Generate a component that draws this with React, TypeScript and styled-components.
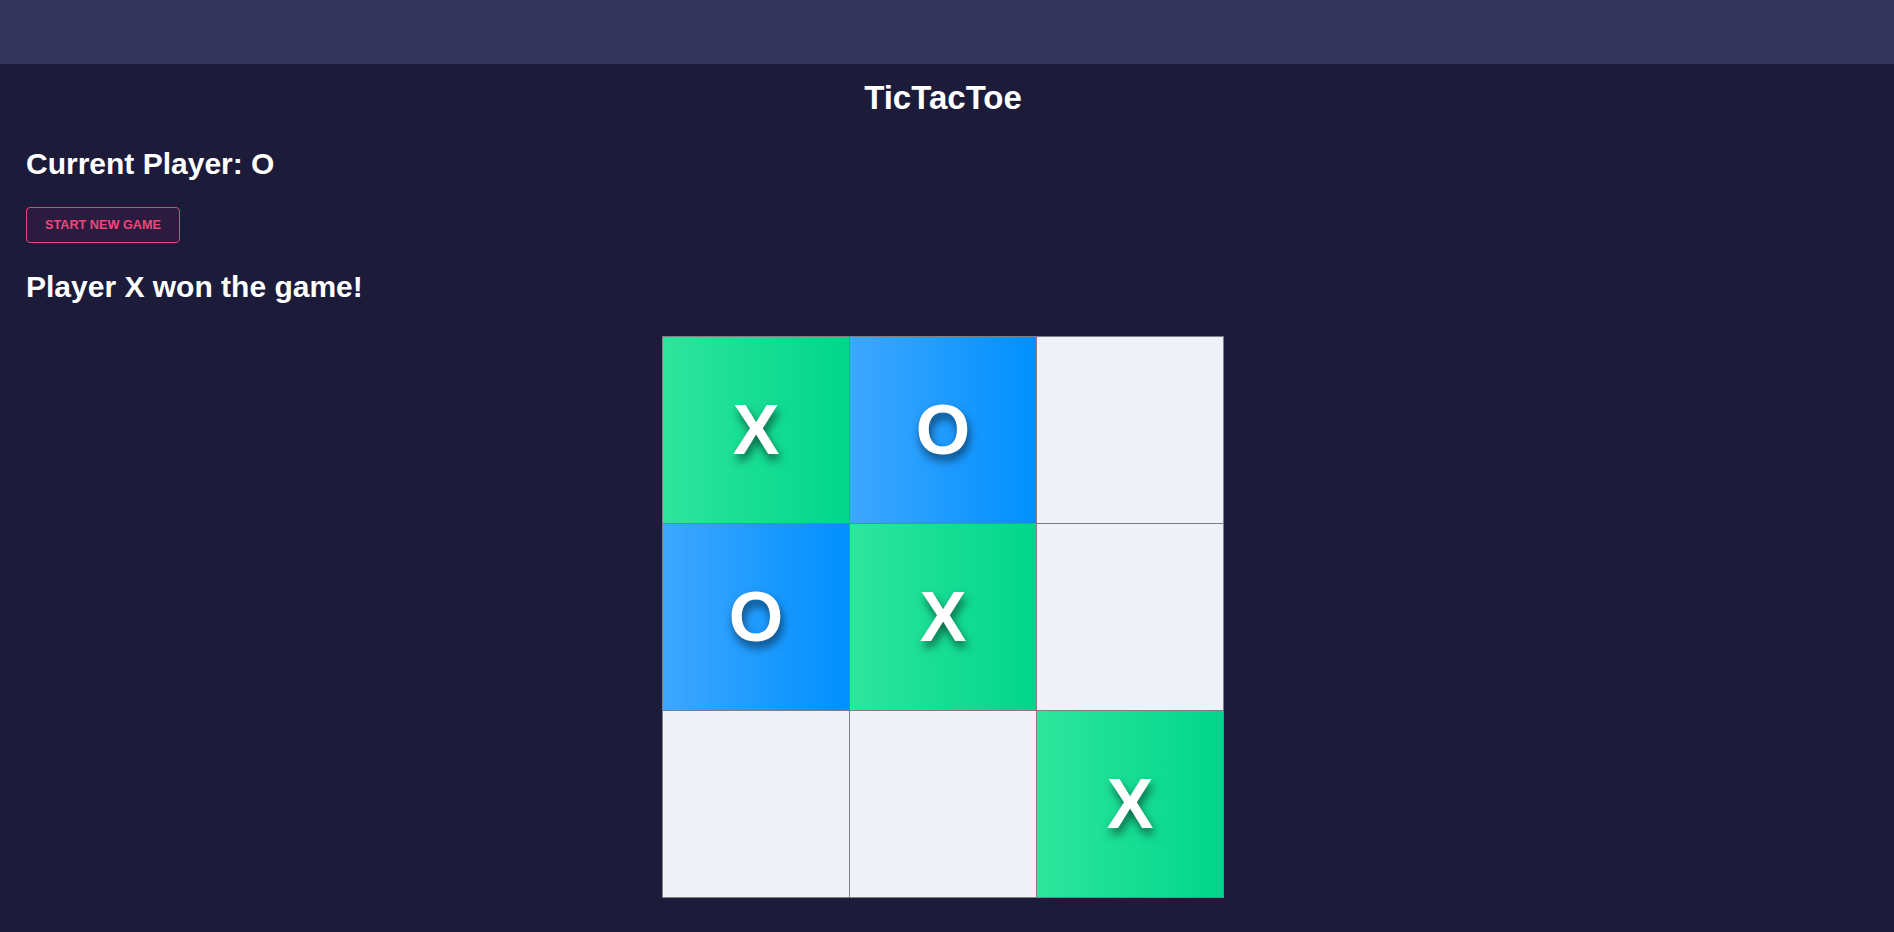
import React from 'react';
import styled, { createGlobalStyle } from 'styled-components';

type Mark = 'X' | 'O' | null;

const board: Mark[] = ['X', 'O', null, 'O', 'X', null, null, null, 'X'];

const GlobalStyle = createGlobalStyle`
  html, body {
    margin: 0;
    padding: 0;
    background: #1c1b3a;
    font-family: 'Liberation Sans', Arial, sans-serif;
  }
`;

const Page = styled.div`
  min-height: 932px;
  background: #1c1b3a;
  color: #ffffff;
`;

const TopBar = styled.header`
  height: 64px;
  background: #34335b;
`;

const Content = styled.main`
  display: flex;
  flex-direction: column;
  padding: 0 34px 0 26px;
`;

const Title = styled.h1`
  margin: 16px 0 0;
  font-size: 33px;
  line-height: 36px;
  font-weight: 700;
  text-align: center;
`;

const Heading = styled.h2<{ $top: number }>`
  margin: ${(props) => props.$top}px 0 0;
  font-size: 30px;
  line-height: 34px;
  font-weight: 700;
`;

const NewGameButton = styled.button`
  align-self: flex-start;
  margin-top: 26px;
  height: 36px;
  padding: 0 18px;
  border: 1px solid #e8457a;
  border-radius: 4px;
  background: #2a1b3f;
  color: #f2457c;
  font-family: 'Liberation Sans', Arial, sans-serif;
  font-size: 12.7px;
  font-weight: 700;
  text-transform: uppercase;
  cursor: pointer;
`;

const Board = styled.div`
  align-self: center;
  margin-top: 32px;
  display: grid;
  grid-template-columns: repeat(3, 186px);
  grid-auto-rows: 186px;
  gap: 1px;
  padding: 1px;
  background: #7d7d86;
`;

const Cell = styled.div<{ $mark: Mark }>`
  display: flex;
  align-items: center;
  justify-content: center;
  background: ${(props) =>
    props.$mark === 'X'
      ? 'linear-gradient(90deg, #2ee59d 0%, #00d68b 100%)'
      : props.$mark === 'O'
      ? 'linear-gradient(90deg, #3ea7ff 0%, #0090ff 100%)'
      : '#eff0f8'};
  color: #ffffff;
  font-size: 70px;
  font-weight: 700;
  text-shadow: 2px 6px 10px rgba(0, 0, 0, 0.55);
`;

export default function App() {
  return (
    <Page>
      <GlobalStyle />
      <TopBar />
      <Content>
        <Title>TicTacToe</Title>
        <Heading $top={31}>Current Player: O</Heading>
        <NewGameButton>Start new game</NewGameButton>
        <Heading $top={27}>Player X won the game!</Heading>
        <Board>
          {board.map((mark, i) => (
            <Cell key={i} $mark={mark}>
              {mark}
            </Cell>
          ))}
        </Board>
      </Content>
    </Page>
  );
}
